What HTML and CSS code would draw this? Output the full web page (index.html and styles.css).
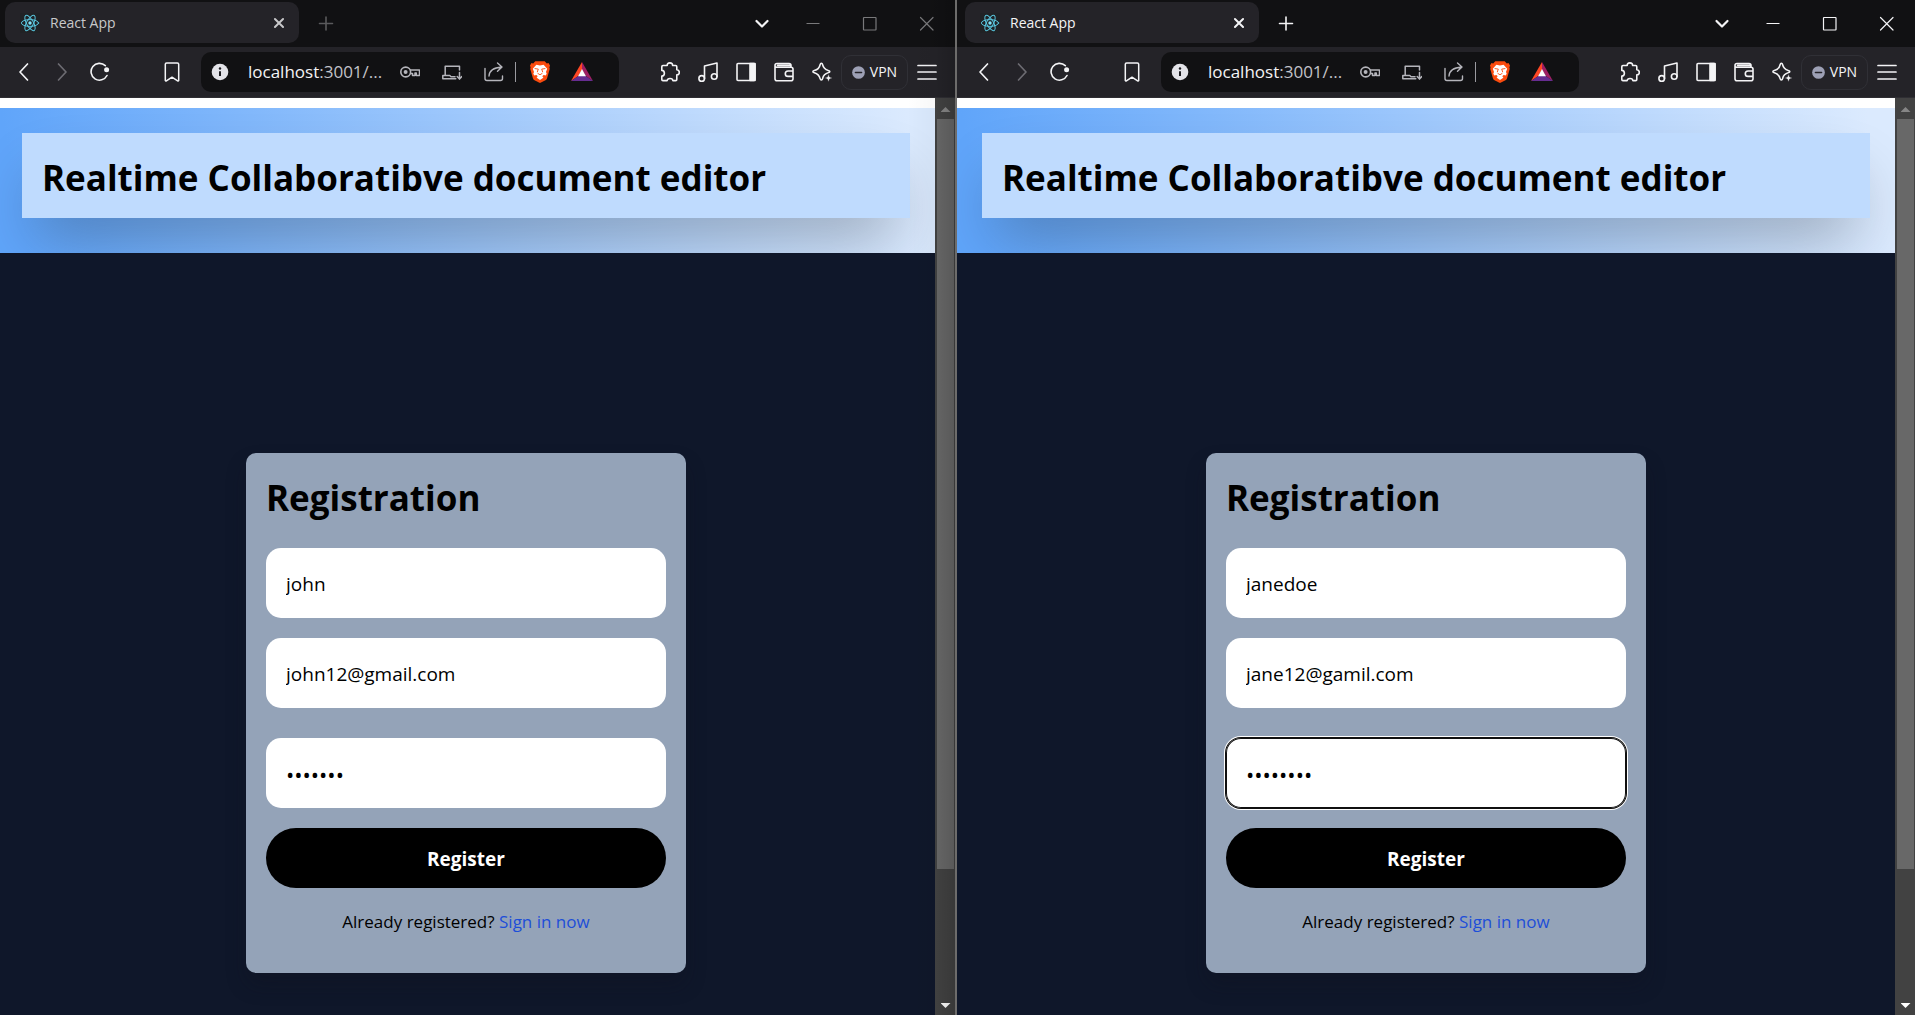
FILE: index.html
```html
<!DOCTYPE html>
<html lang="en">
<head>
<meta charset="utf-8">
<title>React App</title>
<link rel="stylesheet" href="styles.css">
</head>
<body>
<svg class="sprite" aria-hidden="true">
  <symbol id="react" viewBox="0 0 20 20"><rect width="20" height="20" fill="#202225"/><g fill="none" stroke="#58c4dc" stroke-width="1"><ellipse cx="10" cy="10" rx="8.6" ry="3.4"/><ellipse cx="10" cy="10" rx="8.6" ry="3.4" transform="rotate(60 10 10)"/><ellipse cx="10" cy="10" rx="8.6" ry="3.4" transform="rotate(120 10 10)"/></g><circle cx="10" cy="10" r="1.7" fill="#7fe3f7"/></symbol>
  <symbol id="close" viewBox="0 0 20 20"><path d="M5.5 5.5l9 9M14.5 5.5l-9 9" stroke-width="2.2"/></symbol>
  <symbol id="plus" viewBox="0 0 20 20"><path d="M10 3v13M3.500 9.500h13"/></symbol>
  <symbol id="chev-down" viewBox="0 0 20 20"><path d="M4.500 7l5.500 5.500L15.500 7" stroke-width="2.200"/></symbol>
  <symbol id="min" viewBox="0 0 20 20"><path d="M3.500 9.500h13" stroke-width="1" stroke-linecap="butt"/></symbol>
  <symbol id="max" viewBox="0 0 20 20"><rect x="3.500" y="3.500" width="12.500" height="12.500" rx="0.500" stroke-width="1.200"/></symbol>
  <symbol id="win-close" viewBox="0 0 20 20"><path d="M3.500 3.500l12.500 12.500M16 3.500L3.500 16" stroke-width="1.200"/></symbol>
  <symbol id="back" viewBox="0 0 20 20"><path d="M13.500 2L6 10l7.500 8" stroke-width="1.700"/></symbol>
  <symbol id="forward" viewBox="0 0 20 20"><path d="M6.500 2L14 10l-7.500 8" stroke-width="1.700"/></symbol>
  <symbol id="reload" viewBox="0 0 20 20"><path d="M15.300 3.700A8.400 8.400 0 1 0 17 13.500" stroke-width="1.600"/><circle cx="16.600" cy="7.800" r="2.500" fill="currentColor" stroke="none"/></symbol>
  <symbol id="bookmark" viewBox="0 0 20 20"><path d="M3.300 2.200Q3.300 1 4.600 1h10.800q1.300 0 1.300 1.200V18.500q-.3.800-1.100.3L10 15.200 4.400 18.800q-.8.500-1.100-.3z" stroke-width="1.500"/></symbol>
  <symbol id="info" viewBox="0 0 20 20"><circle cx="10" cy="10" r="8.300" fill="#e3e3e8" stroke="none"/><path d="M10 9.300v4.700" stroke="#1b1b1f" stroke-width="2" stroke-linecap="butt"/><circle cx="10" cy="6.500" r="1.200" fill="#1b1b1f" stroke="none"/></symbol>
  <symbol id="key" viewBox="0 0 20 20"><circle cx="5.700" cy="10" r="4.900"/><circle cx="5.600" cy="10" r="2" fill="currentColor" stroke="none"/><path d="M10.500 8h9v5.500h-3.200v-2.500h-1.300v2.500h-2.500v-2H10.500" stroke-width="1.500"/></symbol>
  <symbol id="install" viewBox="0 0 20 20"><path d="M17.500 8V4.300H3.200v9M.8 13.500h7l1.200 1.200h4M.8 13.500v3.200h13M17.500 10.500v6M15.200 14.500l2.300 2.600 2.300-2.600" stroke-width="1.500"/></symbol>
  <symbol id="share" viewBox="0 0 20 20"><path d="M1 6.500v10q0 2 2 2h13.500q2 0 2-2V14M5 14q.5-8 12.500-9M13.500 1l4.500 4-4.500 4.300" stroke-width="1.400"/></symbol>
  <symbol id="brave" viewBox="0 0 20 22"><path d="M5.300.2h9.400l2.100 2.300 1.700-.4L20 4.600l-.6 1.900.4 1.300-2.700 9.400q-.4 1.300-1.600 2.100L11 21.600q-1 .6-2 0l-4.500-2.300q-1.200-.8-1.600-2.100L.2 7.800l.4-1.300L0 4.600l1.500-2.500 1.700.4z" fill="#fb4b0e"/><path d="M10 4.500l3.600-.8 3.600 4-1.200 3.400.7 1.700-1 1.600-2-.5-1.600 1.400 1.300.8-.5.9L10 19l-2.900-2-.5-.9 1.300-.8-1.600-1.400-2 .5-1-1.600.7-1.700-1.200-3.400 3.600-4z" fill="#fff"/><path d="M5 7.600l3.300.5-.9 2.600M15 7.600l-3.300.5.9 2.600M7.900 12.400l2.100 1.400 2.100-1.400" fill="none" stroke="#fb4b0e" stroke-width=".9"/></symbol>
  <symbol id="bat" viewBox="0 0 22 20"><path d="M11 0v7.500L7.300 14 0 19z" fill="#ff4724"/><path d="M11 0l11 19-7.300-5L11 7.500z" fill="#9e1f63"/><path d="M0 19l7.300-5h7.400L22 19z" fill="#662d91"/><path d="M11 7L15 14.200H7z" fill="#fff"/></symbol>
  <symbol id="puzzle" viewBox="0 0 20 20"><path d="M3 3.500h4.200Q7 .9 9.900.9t2.700 2.600h3q1.200 0 1.200 1.200v3q2.500.2 2.500 2.700t-2.500 2.500v4.500q0 1.200-1.200 1.200h-2.800q0-2.100-2.800-2.100T7.200 18.600H3q-1.200 0-1.200-1.200v-3.300q2.600 0 2.600-2.800T1.800 8.400V4.700q0-1.200 1.200-1.200z"/></symbol>
  <symbol id="music" viewBox="0 0 20 20"><circle cx="3.700" cy="16.400" r="2.800"/><circle cx="16.200" cy="14.500" r="2.800"/><path d="M6.500 16.500V4L19 1v13.500"/></symbol>
  <symbol id="sidebar" viewBox="0 0 20 20"><rect x="1" y="1.500" width="18" height="17" rx="1"/><path d="M14 1.500h5v17h-5z" fill="currentColor"/></symbol>
  <symbol id="wallet" viewBox="0 0 20 20"><path d="M3 1.500h12q2 0 2 2V5M1 3.500q0 1.700 2 1.700h14q2 0 2 2v9.500q0 2-2 2H3q-2 0-2-2v-13.200q0-2 2-2M3.500 3.400H17M19 9h-5q-2.700 0-2.700 2.700T14 14.400h5"/></symbol>
  <symbol id="spark" viewBox="0 0 20 20"><path d="M9.300 1.200q1 0 1.300 1.500 1 4.500 5.700 5.900 1.500.4 1.500 1 0 .8-1.500 1.200-4.700 1.200-5.700 5.800-.3 1.400-1.300 1.400-.8 0-1.200-1.400Q7 12.200 2.300 10.800.900 10.400.900 9.700q0-.7 1.400-1.100Q7 7.300 8.100 2.700q.4-1.500 1.200-1.500z"/><path d="M16.500 12l1.100 2.900 2.900 1.100-2.900 1.100-1.100 2.900-1.100-2.900-2.900-1.100 2.900-1.100z" fill="currentColor" stroke="#242328" stroke-width=".5"/></symbol>
  <symbol id="vpn" viewBox="0 0 20 20"><circle cx="10" cy="10" r="9.800" fill="#9da0b5" stroke="none"/><path d="M5.300 10h9.400" stroke="#242328" stroke-width="2.400"/></symbol>
  <symbol id="menu" viewBox="0 0 20 20"><path d="M1 3.500h18M1 10h18M1 17h18" stroke-width="1.700"/></symbol>
</svg>

<div class="desktop">
  <section class="window window-inactive" aria-label="Left browser window">
    <header class="tabstrip">
      <div class="tab">
        <svg class="favicon"><use href="#react"/></svg>
        <span class="tab-title">React App</span>
        <button class="tab-close" aria-label="Close tab"><svg><use href="#close"/></svg></button>
      </div>
      <button class="new-tab" aria-label="New tab"><svg><use href="#plus"/></svg></button>
      <button class="tab-search" aria-label="Search tabs"><svg><use href="#chev-down"/></svg></button>
      <button class="caption" aria-label="Minimize"><svg><use href="#min"/></svg></button>
      <button class="caption" aria-label="Maximize"><svg><use href="#max"/></svg></button>
      <button class="caption" aria-label="Close window"><svg><use href="#win-close"/></svg></button>
    </header>
    <nav class="toolbar" aria-label="Browser toolbar">
      <button class="tool" aria-label="Back"><svg><use href="#back"/></svg></button>
      <button class="tool" aria-label="Forward" disabled><svg><use href="#forward"/></svg></button>
      <button class="tool" aria-label="Reload"><svg><use href="#reload"/></svg></button>
      <button class="tool tool-bookmark" aria-label="Bookmark"><svg><use href="#bookmark"/></svg></button>
      <div class="address">
        <button class="tool" aria-label="Site information"><svg><use href="#info"/></svg></button>
        <span class="url"><b>localhost</b>:3001/...</span>
        <button class="action" aria-label="Passwords"><svg><use href="#key"/></svg></button>
        <button class="action" aria-label="Install app"><svg><use href="#install"/></svg></button>
        <button class="action" aria-label="Share"><svg><use href="#share"/></svg></button>
        <span class="rule"></span>
        <button class="action" aria-label="Shields"><svg class="logo"><use href="#brave"/></svg></button>
        <button class="action" aria-label="Rewards"><svg class="logo"><use href="#bat"/></svg></button>
      </div>
      <button class="tool" aria-label="Extensions"><svg><use href="#puzzle"/></svg></button>
      <button class="tool" aria-label="Media"><svg><use href="#music"/></svg></button>
      <button class="tool" aria-label="Sidebar"><svg><use href="#sidebar"/></svg></button>
      <button class="tool" aria-label="Wallet"><svg><use href="#wallet"/></svg></button>
      <button class="tool" aria-label="Assistant"><svg><use href="#spark"/></svg></button>
      <button class="vpn"><svg><use href="#vpn"/></svg>VPN</button>
      <button class="tool" aria-label="Menu"><svg><use href="#menu"/></svg></button>
    </nav>
    <div class="viewport">
      <div class="page">
        <div class="hero"><h1 class="title banner">Realtime Collaboratibve document editor</h1></div>
        <main class="content">
          <form class="card">
            <h2 class="title">Registration</h2>
            <input class="field" type="text" aria-label="Username" value="john">
            <input class="field" type="email" aria-label="Email" value="john12@gmail.com">
            <input class="field field-password" type="password" aria-label="Password" value="1234567">
            <button class="submit" type="button">Register</button>
            <p class="hint">Already registered? <a href="#signin">Sign in now</a></p>
          </form>
        </main>
      </div>
      <div class="scrollbar"><span class="arrow arrow-up"></span><div class="track"><div class="thumb"></div></div><span class="arrow arrow-down"></span></div>
    </div>
  </section>

  <section class="window" aria-label="Right browser window">
    <header class="tabstrip">
      <div class="tab">
        <svg class="favicon"><use href="#react"/></svg>
        <span class="tab-title">React App</span>
        <button class="tab-close" aria-label="Close tab"><svg><use href="#close"/></svg></button>
      </div>
      <button class="new-tab" aria-label="New tab"><svg><use href="#plus"/></svg></button>
      <button class="tab-search" aria-label="Search tabs"><svg><use href="#chev-down"/></svg></button>
      <button class="caption" aria-label="Minimize"><svg><use href="#min"/></svg></button>
      <button class="caption" aria-label="Maximize"><svg><use href="#max"/></svg></button>
      <button class="caption" aria-label="Close window"><svg><use href="#win-close"/></svg></button>
    </header>
    <nav class="toolbar" aria-label="Browser toolbar">
      <button class="tool" aria-label="Back"><svg><use href="#back"/></svg></button>
      <button class="tool" aria-label="Forward" disabled><svg><use href="#forward"/></svg></button>
      <button class="tool" aria-label="Reload"><svg><use href="#reload"/></svg></button>
      <button class="tool tool-bookmark" aria-label="Bookmark"><svg><use href="#bookmark"/></svg></button>
      <div class="address">
        <button class="tool" aria-label="Site information"><svg><use href="#info"/></svg></button>
        <span class="url"><b>localhost</b>:3001/...</span>
        <button class="action" aria-label="Passwords"><svg><use href="#key"/></svg></button>
        <button class="action" aria-label="Install app"><svg><use href="#install"/></svg></button>
        <button class="action" aria-label="Share"><svg><use href="#share"/></svg></button>
        <span class="rule"></span>
        <button class="action" aria-label="Shields"><svg class="logo"><use href="#brave"/></svg></button>
        <button class="action" aria-label="Rewards"><svg class="logo"><use href="#bat"/></svg></button>
      </div>
      <button class="tool" aria-label="Extensions"><svg><use href="#puzzle"/></svg></button>
      <button class="tool" aria-label="Media"><svg><use href="#music"/></svg></button>
      <button class="tool" aria-label="Sidebar"><svg><use href="#sidebar"/></svg></button>
      <button class="tool" aria-label="Wallet"><svg><use href="#wallet"/></svg></button>
      <button class="tool" aria-label="Assistant"><svg><use href="#spark"/></svg></button>
      <button class="vpn"><svg><use href="#vpn"/></svg>VPN</button>
      <button class="tool" aria-label="Menu"><svg><use href="#menu"/></svg></button>
    </nav>
    <div class="viewport">
      <div class="page">
        <div class="hero"><h1 class="title banner">Realtime Collaboratibve document editor</h1></div>
        <main class="content">
          <form class="card">
            <h2 class="title">Registration</h2>
            <input class="field" type="text" aria-label="Username" value="janedoe">
            <input class="field" type="email" aria-label="Email" value="jane12@gamil.com">
            <input class="field field-password field-focused" type="password" aria-label="Password" value="12345678">
            <button class="submit" type="button">Register</button>
            <p class="hint">Already registered? <a href="#signin">Sign in now</a></p>
          </form>
        </main>
      </div>
      <div class="scrollbar"><span class="arrow arrow-up"></span><div class="track"><div class="thumb"></div></div><span class="arrow arrow-down"></span></div>
    </div>
  </section>
</div>
</body>
</html>
```
FILE: styles.css
```css
* { box-sizing: border-box; margin: 0; }

body {
  font-family: "Segoe UI", "Open Sans", "Noto Sans", sans-serif;
  background: #6d6c6b;
  overflow: hidden;
}

button {
  font: inherit;
  color: inherit;
  background: none;
  border: 0;
  padding: 0;
  display: flex;
  align-items: center;
  justify-content: center;
}

svg {
  width: 20px;
  height: 20px;
  display: block;
  flex: none;
  fill: none;
  stroke: currentColor;
  stroke-width: 1.6;
  stroke-linecap: round;
  stroke-linejoin: round;
}

.sprite { position: absolute; width: 0; height: 0; }

.logo { stroke: none; width: 22px; height: 22px; }

/* Two windows snapped side by side; the left one starts just off screen */
.desktop {
  display: flex;
  gap: 2px;
  height: 100vh;
  margin-left: -3px;
}

.window {
  position: relative;
  flex: 1;
  min-width: 0;
  display: flex;
  flex-direction: column;
  color: #f4f4f6;
  background: #111113;
}

/* Shadow cast by the window on the right */
.window-inactive::after {
  content: "";
  position: absolute;
  inset: 0 0 0 auto;
  width: 48px;
  background: linear-gradient(90deg, transparent, rgba(0, 0, 0, .03) 60%, rgba(0, 0, 0, .15));
  pointer-events: none;
}

.tabstrip { display: flex; align-items: center; height: 47px; }

.tab {
  display: flex;
  align-items: center;
  width: 294px;
  height: 41px;
  margin: 0 10px 2px 8px;
  padding: 0 11px 0 15px;
  gap: 10px;
  border-radius: 10px;
  background: #242328;
}

.tab-title { flex: 1; font-size: 14px; line-height: 20px; }
.favicon { stroke: none; }
.tab-close svg { width: 18px; height: 18px; }
.new-tab { width: 34px; height: 40px; }
.tab-search { width: 44px; height: 40px; margin-left: auto; }
.caption { width: 57px; height: 40px; }

.window-inactive .tab-title,
.window-inactive .tab-close { color: #c8c8ca; }
.window-inactive .new-tab { color: #5a5a5c; }
.window-inactive .caption { color: #79797b; }

.toolbar {
  display: flex;
  align-items: center;
  height: 51px;
  padding: 0 9px 0 8px;
  background: #242328;
  border-bottom: 1px solid #2f2e33;
}

.tool { width: 38px; height: 38px; flex: none; }
.tool:disabled { color: #6d6c72; }
.tool-bookmark { margin-left: 34px; }

.address {
  flex: 1;
  min-width: 0;
  display: flex;
  align-items: center;
  height: 40px;
  margin: 0 32px 0 10px;
  padding-right: 16px;
  border-radius: 10px;
  background: #111113;
}

.url {
  flex: 1;
  min-width: 0;
  padding-left: 9px;
  overflow: hidden;
  white-space: nowrap;
  font-size: 17px;
  line-height: 24px;
  color: #c3c3c9;
}
.url b { font-weight: 400; color: #f4f4f6; }

.action { width: 42px; height: 38px; flex: none; color: #b5b5bb; }
.rule { width: 1px; height: 20px; margin-right: 3px; background: #9a9aa0; }

.vpn {
  width: 67px;
  height: 35px;
  gap: 5px;
  border: 1px solid #303036;
  border-radius: 10px;
  font-size: 14px;
  line-height: 20px;
}
.vpn svg { width: 13px; height: 13px; }

.viewport { flex: 1; min-height: 0; display: flex; }

.page {
  flex: 1;
  min-width: 0;
  display: flex;
  flex-direction: column;
  padding-top: 10px;
  overflow: hidden;
  color: #000;
  background: #fff;
}

.hero {
  flex: none;
  padding: 25px 25px 35px;
  background: linear-gradient(80deg, #60a5fa 3%, #dbeafe 97%);
}

.title { padding-top: 4px; font-size: 35px; line-height: 41px; font-weight: 700; }

.banner {
  padding: 24px 20px 20px;
  white-space: nowrap;
  background: #bfdbfe;
  box-shadow: 0 31px 62px -15px rgba(0, 0, 0, .3);
}

.content {
  position: relative;
  flex: 1;
  display: flex;
  align-items: flex-start;
  justify-content: center;
  padding-top: 200px;
  background: #0f172a;
}

.card {
  display: flex;
  flex-direction: column;
  width: 440px;
  padding: 20px 20px 38px;
  border-radius: 10px;
  background: #94a3b8;
  box-shadow: 0 12px 20px rgba(15, 15, 30, .3);
}

.card .title { margin-bottom: 30px; }

.field {
  width: 100%;
  height: 70px;
  margin-bottom: 20px;
  padding: 2px 20px 0;
  border: 0;
  border-radius: 15px;
  background: #fff;
  color: #000;
  font-family: inherit;
  font-size: 19px;
}
.field-password { margin-top: 10px; font-size: 22px; }
.field-focused {
  box-shadow: inset 0 0 0 1px #101010, 0 0 0 1px #101010, 0 0 0 2px #fff;
}

.submit {
  height: 60px;
  margin-bottom: 20px;
  padding-top: 2px;
  border-radius: 30px;
  background: #000;
  color: #fff;
  font-size: 19px;
  font-weight: 700;
}

.hint { text-align: center; font-size: 17px; line-height: 27px; }
.hint a { color: #1d4ed8; text-decoration: none; }

.scrollbar {
  display: flex;
  flex-direction: column;
  width: 20px;
  padding: 9px 1px 7px 2px;
  background: #424242;
}

.track { flex: 1; margin: 7px 0 9px; }
.thumb { height: calc(600% / 7); background: #686868; }

.arrow {
  align-self: center;
  width: 10px;
  height: 5px;
  background: #fff;
}
.arrow-up { background: #868686; clip-path: polygon(50% 0, 100% 100%, 0 100%); }
.arrow-down { clip-path: polygon(0 0, 100% 0, 50% 100%); }
```
